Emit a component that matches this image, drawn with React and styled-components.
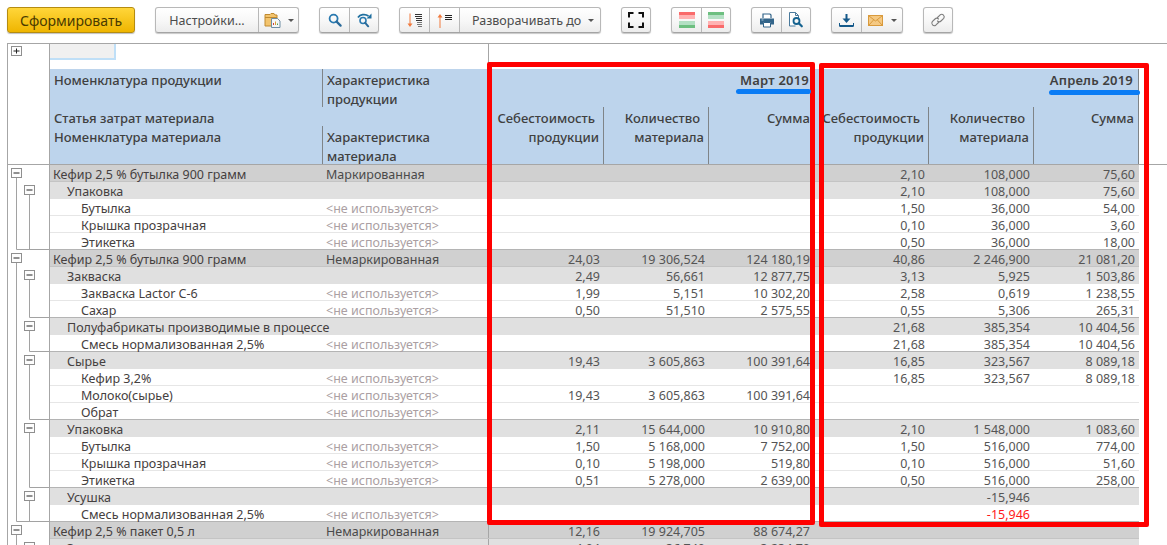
import React from 'react';
import styled, { createGlobalStyle } from 'styled-components';

const Global = createGlobalStyle`
  html, body { margin: 0; padding: 0; background: #fff; }
  body { font-family: "Noto Sans", "Open Sans", sans-serif; overflow: hidden; }
`;

const Page = styled.div`
  position: relative;
  width: 1167px;
  height: 545px;
  overflow: hidden;
  background: #fff;
`;

const Toolbar = styled.div`
  display: flex;
  align-items: flex-start;
  gap: 20px;
  height: 43px;
  box-sizing: border-box;
  padding: 7px 0 0 7px;
`;

const PrimaryButton = styled.div`
  width: 128px;
  height: 26px;
  box-sizing: border-box;
  display: flex;
  align-items: center;
  justify-content: center;
  font-size: 14px;
  color: #4a3a00;
  border: 1px solid #b58c10;
  border-radius: 3px;
  background: linear-gradient(#ffd63a, #efb500);
  box-shadow: 0 1px 1px rgba(0, 0, 0, 0.25);
`;

const Group = styled.div`
  display: flex;
  height: 26px;
  box-sizing: border-box;
  border: 1px solid #b8b8b8;
  border-bottom-color: #a4a4a4;
  border-radius: 3px;
  background: linear-gradient(#ffffff, #f7f7f7 55%, #ececec);
  box-shadow: 0 1px 1px rgba(0, 0, 0, 0.22);
`;

const Part = styled.div`
  width: ${(p) => p.$w}px;
  box-sizing: border-box;
  display: flex;
  align-items: center;
  justify-content: ${(p) => p.$justify || 'center'};
  padding-left: ${(p) => p.$pl || 0}px;
  gap: ${(p) => p.$gap || 0}px;
  font-size: 12.5px;
  color: #4c4c4c;
  white-space: nowrap;
  & + & { border-left: 1px solid #b8b8b8; }
`;

const Caret = styled.span`
  width: 0;
  height: 0;
  border-left: 3.5px solid transparent;
  border-right: 3.5px solid transparent;
  border-top: 3.5px solid #555;
  margin-top: 1px;
`;

const Sheet = styled.div`
  margin-left: 7px;
  border-left: 1px solid #a6a6a6;
  border-top: 1px solid #a6a6a6;
`;

const HeadArea = styled.div`
  display: flex;
  height: 121px;
  box-sizing: border-box;
  border-bottom: 1px solid #a6a6a6;
`;

const HeadTree = styled.div`
  width: 42px;
  box-sizing: border-box;
  border-right: 1px solid #a6a6a6;
  padding: 2px 0 0 3px;
`;

const HeadMain = styled.div`
  display: flex;
  flex-direction: column;
`;

const TopStrip = styled.div`
  height: 25px;
  width: 439px;
  box-sizing: border-box;
  border-right: 1px solid #a6a6a6;
`;

const CurrentCell = styled.div`
  width: 66px;
  height: 16px;
  box-sizing: border-box;
  background: #f0f0f0;
  border-right: 2px solid #bfdff7;
  border-bottom: 2px solid #bfdff7;
`;

const BlueHead = styled.div`
  display: grid;
  width: 1089px;
  height: 95px;
  grid-template-columns: 273px 166px 115px 105px 105px 115px 105px 105px;
  grid-template-rows: 38px 19px 38px;
  background: #bdd4ec;
  font-size: 13px;
  font-weight: 500;
  line-height: 19px;
  color: #40403f;
`;

const HeadCell = styled.div`
  grid-column: ${(p) => p.$col};
  grid-row: ${(p) => p.$row};
  box-sizing: border-box;
  padding: 2px 0 0 4px;
  white-space: nowrap;
  border-right: ${(p) => (p.$rule ? '1px solid #7f8488' : '0')};
`;

const MeasureCell = styled(HeadCell)`
  padding: 2px 4px 0 0;
  text-align: right;
  border-right: ${(p) => (p.$rule ? '1px solid #7f8488' : '0')};
`;

const MonthCell = styled(HeadCell)`
  padding: 2px 5px 0 0;
  text-align: right;
  font-weight: 600;
  letter-spacing: 0.2px;
`;

const FirstLine = styled.span`
  display: block;
  padding-right: 4px;
`;

const Row = styled.div`
  display: flex;
  height: 17px;
`;

const TreeCell = styled.div`
  width: 42px;
  flex: none;
  box-sizing: border-box;
  border-right: 1px solid #a6a6a6;
  line-height: 0;
`;

const RowCells = styled.div`
  display: grid;
  width: 1089px;
  height: 17px;
  grid-template-columns: 273px 166px 115px 105px 105px 115px 105px 105px;
  grid-template-rows: 16px;
  box-sizing: border-box;
  font-size: 12.5px;
  line-height: 20px;
  color: #4a4a4a;
  background: ${(p) => (p.$level === 1 ? '#d0d0d0' : p.$level === 2 ? '#e0e0e0' : '#fff')};
  border-bottom: 1px solid ${(p) => (p.$closing ? '#b4b4b4' : p.$level === 3 ? '#e6e6e6' : p.$level === 1 ? '#c4c4c4' : '#e0e0e0')};
`;

const NameCell = styled.div`
  padding-left: ${(p) => 3 + (p.$level - 1) * 14}px;
  white-space: nowrap;
  color: #454040;
`;

const CharCell = styled.div`
  padding-left: 3px;
  white-space: nowrap;
  box-sizing: border-box;
  border-right: 1px solid #a6a6a6;
  color: ${(p) => (p.$unused ? '#ab9fa3' : '#4a4a4a')};
`;

const NumCell = styled.div`
  padding-right: 4px;
  text-align: right;
  white-space: nowrap;
  color: ${(p) => (p.$red ? '#ff1a1a' : '#555')};
`;

const RedFrame = styled.div`
  position: absolute;
  left: ${(p) => p.$x}px;
  top: ${(p) => p.$y}px;
  width: ${(p) => p.$w}px;
  height: ${(p) => p.$h}px;
  box-sizing: border-box;
  border: 5px solid #ff0000;
  border-radius: 2px;
`;

const BlueMark = styled.div`
  position: absolute;
  left: ${(p) => p.$x}px;
  top: ${(p) => p.$y}px;
  width: ${(p) => p.$w}px;
  height: 5px;
  border-radius: 3px;
  background: #0a7cf5;
`;

const Icon = ({ w = 16, h = 16, children }) => (
  <svg width={w} height={h} viewBox={`0 0 ${w} ${h}`} fill="none" style={{ display: 'block', flex: 'none' }}>
    {children}
  </svg>
);

const FolderIcon = () => (
  <Icon w={17} h={16}>
    <path d="M1 2.5h5l1-1h3l1 1.5h2v11H1z" fill="#f3c46d" stroke="#c08a30" />
    <path d="M1 5.5h12" stroke="#c08a30" />
    <path d="M7.5 6.5h6l2.5 2.5v6.5H7.5z" fill="#f5f7f8" stroke="#6f8ea3" />
    <path d="M9.5 13v-2" stroke="#d04040" />
    <path d="M11.5 13V9.5" stroke="#d9a030" />
    <path d="M13.5 13v-1.5" stroke="#50a050" />
  </Icon>
);

const SearchIcon = () => (
  <Icon w={14} h={14}>
    <circle cx="5.6" cy="5.6" r="4" stroke="#2a7ab0" strokeWidth="1.8" />
    <path d="M8.6 8.6l4 4" stroke="#2a6a9a" strokeWidth="2.2" strokeLinecap="round" />
  </Icon>
);

const SearchAgainIcon = () => (
  <Icon w={15} h={15}>
    <path d="M1 4.5C3 1.5 8 0.5 11.5 3" stroke="#1f6f9f" strokeWidth="1.8" />
    <path d="M14.5 0.5v5h-5z" fill="#1f6f9f" />
    <circle cx="6" cy="7.5" r="3" stroke="#2a7ab0" strokeWidth="1.6" />
    <path d="M8.2 9.8l3 3.5" stroke="#2a6a9a" strokeWidth="2" strokeLinecap="round" />
  </Icon>
);

const SortDownIcon = () => (
  <Icon w={16} h={15}>
    <path d="M3 0.5v12" stroke="#f07a3e" />
    <path d="M0.5 10.5h5L3 14z" fill="#f07a3e" />
    <path d="M8 1.5h7M8 3.5h7M9 5.5h6M9 7.5h6" stroke="#333" />
    <path d="M10 9.5h5M10 11.5h5M11 13.5h4" stroke="#777" />
  </Icon>
);

const SortUpIcon = () => (
  <Icon w={16} h={15}>
    <path d="M3 3v12" stroke="#f07a3e" />
    <path d="M0.5 4.5h5L3 1z" fill="#f07a3e" />
    <path d="M8 2.5h7M8 4.5h7M8 6.5h7" stroke="#222" />
  </Icon>
);

const FullscreenIcon = () => (
  <Icon w={16} h={16}>
    <path d="M1 5.5V1h4.5M10.5 1H15v4.5M1 10.5V15h4.5M10.5 15H15v-4.5" stroke="#111" strokeWidth="2" />
  </Icon>
);

const BarsIcon = ({ first }) => {
  const top = first === 'red' ? ['#f96b6b', '#ffb2b2'] : ['#6dbf80', '#b4e0c4'];
  const bottom = first === 'red' ? ['#b4e0c4', '#6dbf80'] : ['#ffb2b2', '#f96b6b'];
  return (
    <Icon w={16} h={16}>
      <rect x="0" y="0" width="16" height="3" fill={top[0]} />
      <rect x="0" y="3" width="16" height="4" fill={top[1]} />
      <rect x="0" y="9" width="16" height="4" fill={bottom[0]} />
      <rect x="0" y="13" width="16" height="3" fill={bottom[1]} />
    </Icon>
  );
};

const PrintIcon = () => (
  <Icon w={16} h={15}>
    <path d="M4 5V1h7l1 1v3" stroke="#33658a" strokeWidth="1.2" fill="#fff" />
    <path d="M1 5.5h14v6H12v-2H4v2H1z" fill="#33658a" />
    <path d="M4.5 9.5h7v4.5h-7z" fill="#fff" stroke="#33658a" />
    <path d="M2.5 7h2" stroke="#a8c8dc" />
  </Icon>
);

const PreviewIcon = () => (
  <Icon w={16} h={16}>
    <path d="M1.5 0.5h6l3 3v3M1.5 0.5v13.5h6" stroke="#4b7a9c" fill="#fff" />
    <path d="M7.5 0.5v3h3" stroke="#4b7a9c" />
    <circle cx="8.5" cy="9" r="3" stroke="#14628f" strokeWidth="1.8" />
    <path d="M10.8 11.3l3 3" stroke="#14628f" strokeWidth="2.2" strokeLinecap="round" />
  </Icon>
);

const DownloadIcon = () => (
  <Icon w={15} h={13}>
    <path d="M7.5 0v6" stroke="#14598a" strokeWidth="2" />
    <path d="M3.5 4.5h8l-4 4.5z" fill="#14598a" />
    <path d="M0.5 9v3h14V9" stroke="#14598a" strokeWidth="1" />
    <path d="M0.5 12h14" stroke="#14598a" strokeWidth="2" />
  </Icon>
);

const MailIcon = () => (
  <Icon w={15} h={11}>
    <rect x="0.5" y="0.5" width="14" height="10" fill="#f5c983" stroke="#d99a3c" />
    <path d="M1 1l6.5 5L14 1M1 10l4.5-5M14 10L9.5 5" stroke="#d99a3c" />
  </Icon>
);

const LinkIcon = () => (
  <Icon w={16} h={16}>
    <path d="M7.5 5.5L10.2 2.8a2.5 2.5 0 0 1 3.5 3.5L11 9a2.5 2.5 0 0 1-3.5 0" stroke="#7d7d7d" strokeWidth="1.1" strokeLinecap="round" />
    <path d="M8.5 10.5L5.8 13.2a2.5 2.5 0 0 1-3.5-3.5L5 7a2.5 2.5 0 0 1 3.5 0" stroke="#7d7d7d" strokeWidth="1.1" strokeLinecap="round" />
  </Icon>
);

const TreeBox = ({ x, y, mode }) => (
  <g>
    <rect x={x} y={y} width="10" height="9" fill="#fdfdfd" stroke="#8f8f8f" />
    <path d={`M${x + 2} ${y + 4.5}h6`} stroke="#222" />
    {mode === 'plus' && <path d={`M${x + 5} ${y + 2}v5`} stroke="#222" />}
  </g>
);

const TreeLines = ({ level, endL1, endL2 }) => {
  const x1 = 8.5;
  const x2 = 21.5;
  return (
    <svg width="41" height="17" viewBox="0 0 41 17" style={{ display: 'block' }}>
      {level === 1 && <path d={`M${x1} 13V17`} stroke="#a2a2a2" />}
      {level > 1 && <path d={`M${x1} 0V${endL1 ? 16.5 : 17}`} stroke="#a2a2a2" />}
      {level === 2 && <path d={`M${x2} 13V${endL2 ? 16.5 : 17}`} stroke="#a2a2a2" />}
      {level === 3 && <path d={`M${x2} 0V${endL2 ? 16.5 : 17}`} stroke="#a2a2a2" />}
      {endL1 && <path d={`M${x1} 16.5H41`} stroke="#a2a2a2" />}
      {!endL1 && endL2 && <path d={`M${x2} 16.5H41`} stroke="#a2a2a2" />}
      {level === 1 && <TreeBox x={3.5} y={3.5} />}
      {level === 2 && <TreeBox x={16.5} y={3.5} />}
    </svg>
  );
};

const K = 'Кефир 2,5 % бутылка 900 грамм';
const rows = [
  [1, K, 'Маркированная', '', '', '', '2,10', '108,000', '75,60'],
  [2, 'Упаковка', '', '', '', '', '2,10', '108,000', '75,60'],
  [3, 'Бутылка', 'u', '', '', '', '1,50', '36,000', '54,00'],
  [3, 'Крышка прозрачная', 'u', '', '', '', '0,10', '36,000', '3,60'],
  [3, 'Этикетка', 'u', '', '', '', '0,50', '36,000', '18,00'],
  [1, K, 'Немаркированная', '24,03', '19 306,524', '124 180,19', '40,86', '2 246,900', '21 081,20'],
  [2, 'Закваска', '', '2,49', '56,661', '12 877,75', '3,13', '5,925', '1 503,86'],
  [3, 'Закваска Lactor C-6', 'u', '1,99', '5,151', '10 302,20', '2,58', '0,619', '1 238,55'],
  [3, 'Сахар', 'u', '0,50', '51,510', '2 575,55', '0,55', '5,306', '265,31'],
  [2, 'Полуфабрикаты производимые в процессе', '', '', '', '', '21,68', '385,354', '10 404,56'],
  [3, 'Смесь нормализованная 2,5%', 'u', '', '', '', '21,68', '385,354', '10 404,56'],
  [2, 'Сырье', '', '19,43', '3 605,863', '100 391,64', '16,85', '323,567', '8 089,18'],
  [3, 'Кефир 3,2%', 'u', '', '', '', '16,85', '323,567', '8 089,18'],
  [3, 'Молоко(сырье)', 'u', '19,43', '3 605,863', '100 391,64', '', '', ''],
  [3, 'Обрат', 'u', '', '', '', '', '', ''],
  [2, 'Упаковка', '', '2,11', '15 644,000', '10 910,80', '2,10', '1 548,000', '1 083,60'],
  [3, 'Бутылка', 'u', '1,50', '5 168,000', '7 752,00', '1,50', '516,000', '774,00'],
  [3, 'Крышка прозрачная', 'u', '0,10', '5 198,000', '519,80', '0,10', '516,000', '51,60'],
  [3, 'Этикетка', 'u', '0,51', '5 278,000', '2 639,00', '0,50', '516,000', '258,00'],
  [2, 'Усушка', '', '', '', '', '', '-15,946', ''],
  [3, 'Смесь нормализованная 2,5%', 'u', '', '', '', '', '-15,946', ''],
  [1, 'Кефир 2,5 % пакет 0,5 л', 'Немаркированная', '12,16', '19 924,705', '88 674,27', '', '', ''],
  [2, 'Закваска', '', '4,04', '36 740', '3 234,70', '', '', ''],
];

export default function App() {
  return (
    <Page>
      <Global />
      <Toolbar>
        <PrimaryButton>Сформировать</PrimaryButton>
        <Group>
          <Part $w={102}>Настройки...</Part>
          <Part $w={40} $gap={7} $justify="flex-start" $pl={5}><FolderIcon /><Caret /></Part>
        </Group>
        <Group>
          <Part $w={29}><SearchIcon /></Part>
          <Part $w={29}><SearchAgainIcon /></Part>
        </Group>
        <Group>
          <Part $w={29}><SortDownIcon /></Part>
          <Part $w={30}><SortUpIcon /></Part>
          <Part $w={141} $gap={7} $justify="flex-start" $pl={12}>Разворачивать до<Caret /></Part>
        </Group>
        <Group>
          <Part $w={28}><FullscreenIcon /></Part>
        </Group>
        <Group>
          <Part $w={29}><BarsIcon first="red" /></Part>
          <Part $w={29}><BarsIcon first="green" /></Part>
        </Group>
        <Group>
          <Part $w={29}><PrintIcon /></Part>
          <Part $w={29}><PreviewIcon /></Part>
        </Group>
        <Group>
          <Part $w={29}><DownloadIcon /></Part>
          <Part $w={41} $gap={8} $justify="flex-start" $pl={6}><MailIcon /><Caret /></Part>
        </Group>
        <Group>
          <Part $w={28}><LinkIcon /></Part>
        </Group>
      </Toolbar>
      <Sheet>
        <HeadArea>
          <HeadTree>
            <svg width="12" height="11" viewBox="0 0 12 11" style={{ display: 'block' }}>
              <TreeBox x={0.5} y={0.5} mode="plus" />
            </svg>
          </HeadTree>
          <HeadMain>
            <TopStrip><CurrentCell /></TopStrip>
            <BlueHead>
              <HeadCell $col="1" $row="1" $rule>Номенклатура продукции</HeadCell>
              <HeadCell $col="2" $row="1">Характеристика<br />продукции</HeadCell>
              <HeadCell $col="1 / 3" $row="2">Статья затрат материала</HeadCell>
              <HeadCell $col="1" $row="3" $rule>Номенклатура материала</HeadCell>
              <HeadCell $col="2" $row="3">Характеристика<br />материала</HeadCell>
              <MonthCell $col="3 / 6" $row="1">Март 2019</MonthCell>
              <MonthCell $col="6 / 9" $row="1" $rule>Апрель 2019</MonthCell>
              <MeasureCell $col="3" $row="2 / 4" $rule><FirstLine>Себестоимость</FirstLine>продукции</MeasureCell>
              <MeasureCell $col="4" $row="2 / 4" $rule><FirstLine>Количество</FirstLine>материала</MeasureCell>
              <MeasureCell $col="5" $row="2 / 4">Сумма</MeasureCell>
              <MeasureCell $col="6" $row="2 / 4" $rule><FirstLine>Себестоимость</FirstLine>продукции</MeasureCell>
              <MeasureCell $col="7" $row="2 / 4" $rule><FirstLine>Количество</FirstLine>материала</MeasureCell>
              <MeasureCell $col="8" $row="2 / 4" $rule>Сумма</MeasureCell>
            </BlueHead>
          </HeadMain>
        </HeadArea>
        {rows.map((r, i) => {
          const [level, name, char, ...nums] = r;
          const next = rows[i + 1];
          const endL1 = !!next && next[0] === 1;
          const endL2 = !!next && next[0] <= 2 && level === 3;
          return (
            <Row key={i}>
              <TreeCell><TreeLines level={level} endL1={endL1} endL2={endL2} /></TreeCell>
              <RowCells $level={level} $closing={!!next && next[0] < level}>
                <NameCell $level={level}>{name}</NameCell>
                <CharCell $unused={char === 'u'}>{char === 'u' ? '<не используется>' : char}</CharCell>
                {nums.map((n, j) => (
                  <NumCell key={j} $red={i === 20 && j === 4}>{n}</NumCell>
                ))}
              </RowCells>
            </Row>
          );
        })}
      </Sheet>
      <RedFrame $x={487} $y={62} $w={328} $h={463} />
      <RedFrame $x={819} $y={63} $w={330} $h={464} />
      <BlueMark $x={736} $y={89} $w={75} />
      <BlueMark $x={1049} $y={90} $w={91} />
    </Page>
  );
}
